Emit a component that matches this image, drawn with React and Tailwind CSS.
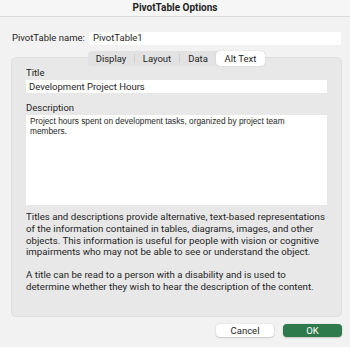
const App = () => {
    return (
        <div className="w-[350px] h-[347px] bg-[#f2f2f2] overflow-hidden text-[#1f1f1f] font-['Roboto',sans-serif]">
            {/* Title bar */}
            <div className="h-[17px] bg-[#f6f6f6] border-b border-[#dcdcdc] flex items-center justify-center">
                <span className="text-[10px] font-bold leading-none">PivotTable Options</span>
            </div>

            {/* Name row */}
            <div className="flex items-center mt-[14px] pl-[12px] pr-[9px]">
                <span className="text-[9.5px] w-[77px] whitespace-nowrap">PivotTable name:</span>
                <div className="flex-1 h-[13px] bg-white flex items-center px-[4px] text-[9.5px]">PivotTable1</div>
            </div>

            {/* Tabs */}
            <div className="relative z-10 flex ml-[88px] mt-[6px] w-[177px] h-[15px] bg-[#e2e2e2] rounded-[4px] text-[9.5px]">
                <div className="w-[47px] flex items-center justify-center border-r border-[#cfcfcf] my-[3px]">Display</div>
                <div className="w-[45px] flex items-center justify-center border-r border-[#cfcfcf] my-[3px]">Layout</div>
                <div className="w-[36px] flex items-center justify-center">Data</div>
                <div className="w-[49px] flex items-center justify-center bg-white rounded-[4px] shadow-[0_0_1px_rgba(0,0,0,0.3)]">Alt Text</div>
            </div>

            {/* Panel */}
            <div className="-mt-[9px] mx-[11px] w-[331px] h-[260px] bg-[#e8e8e8] rounded-[5px] border border-[#e0e0e0] px-[14px] pt-[8px]">
                <div className="text-[9.5px] leading-[13px]">Title</div>
                <div className="mt-[1px] h-[13px] bg-white flex items-center px-[3px] text-[9.5px]">Development Project Hours</div>
                <div className="mt-[8px] text-[9.5px] leading-[13px]">Description</div>
                <div className="mt-[1px] h-[90px] bg-white pl-[4px] pr-[10px] pt-[1px] text-[8.3px] leading-[10px] font-['Liberation_Sans',sans-serif]">
                    Project hours spent on development tasks, organized by project team members.
                </div>
                <div className="mt-[6px] text-[9.7px] leading-[11.7px]">
                    <p>Titles and descriptions provide alternative, text-based representations of the information contained in tables, diagrams, images, and other objects. This information is useful for people with vision or cognitive impairments who may not be able to see or understand the object.</p>
                    <p className="mt-[11px] w-[290px]">A title can be read to a person with a disability and is used to determine whether they wish to hear the description of the content.</p>
                </div>
            </div>

            {/* Buttons */}
            <div className="flex justify-end gap-[9px] mt-[7px] pr-[8px]">
                <button className="w-[58px] h-[13px] bg-white rounded-[4px] shadow-[0_0.5px_1.5px_rgba(0,0,0,0.3)] text-[9.5px] leading-none">Cancel</button>
                <button className="w-[59px] h-[13px] bg-[#2f7a4c] text-white rounded-[4px] shadow-[0_0.5px_1.5px_rgba(0,0,0,0.3)] text-[9.5px] leading-none">OK</button>
            </div>
        </div>
    );
};

export default App;
